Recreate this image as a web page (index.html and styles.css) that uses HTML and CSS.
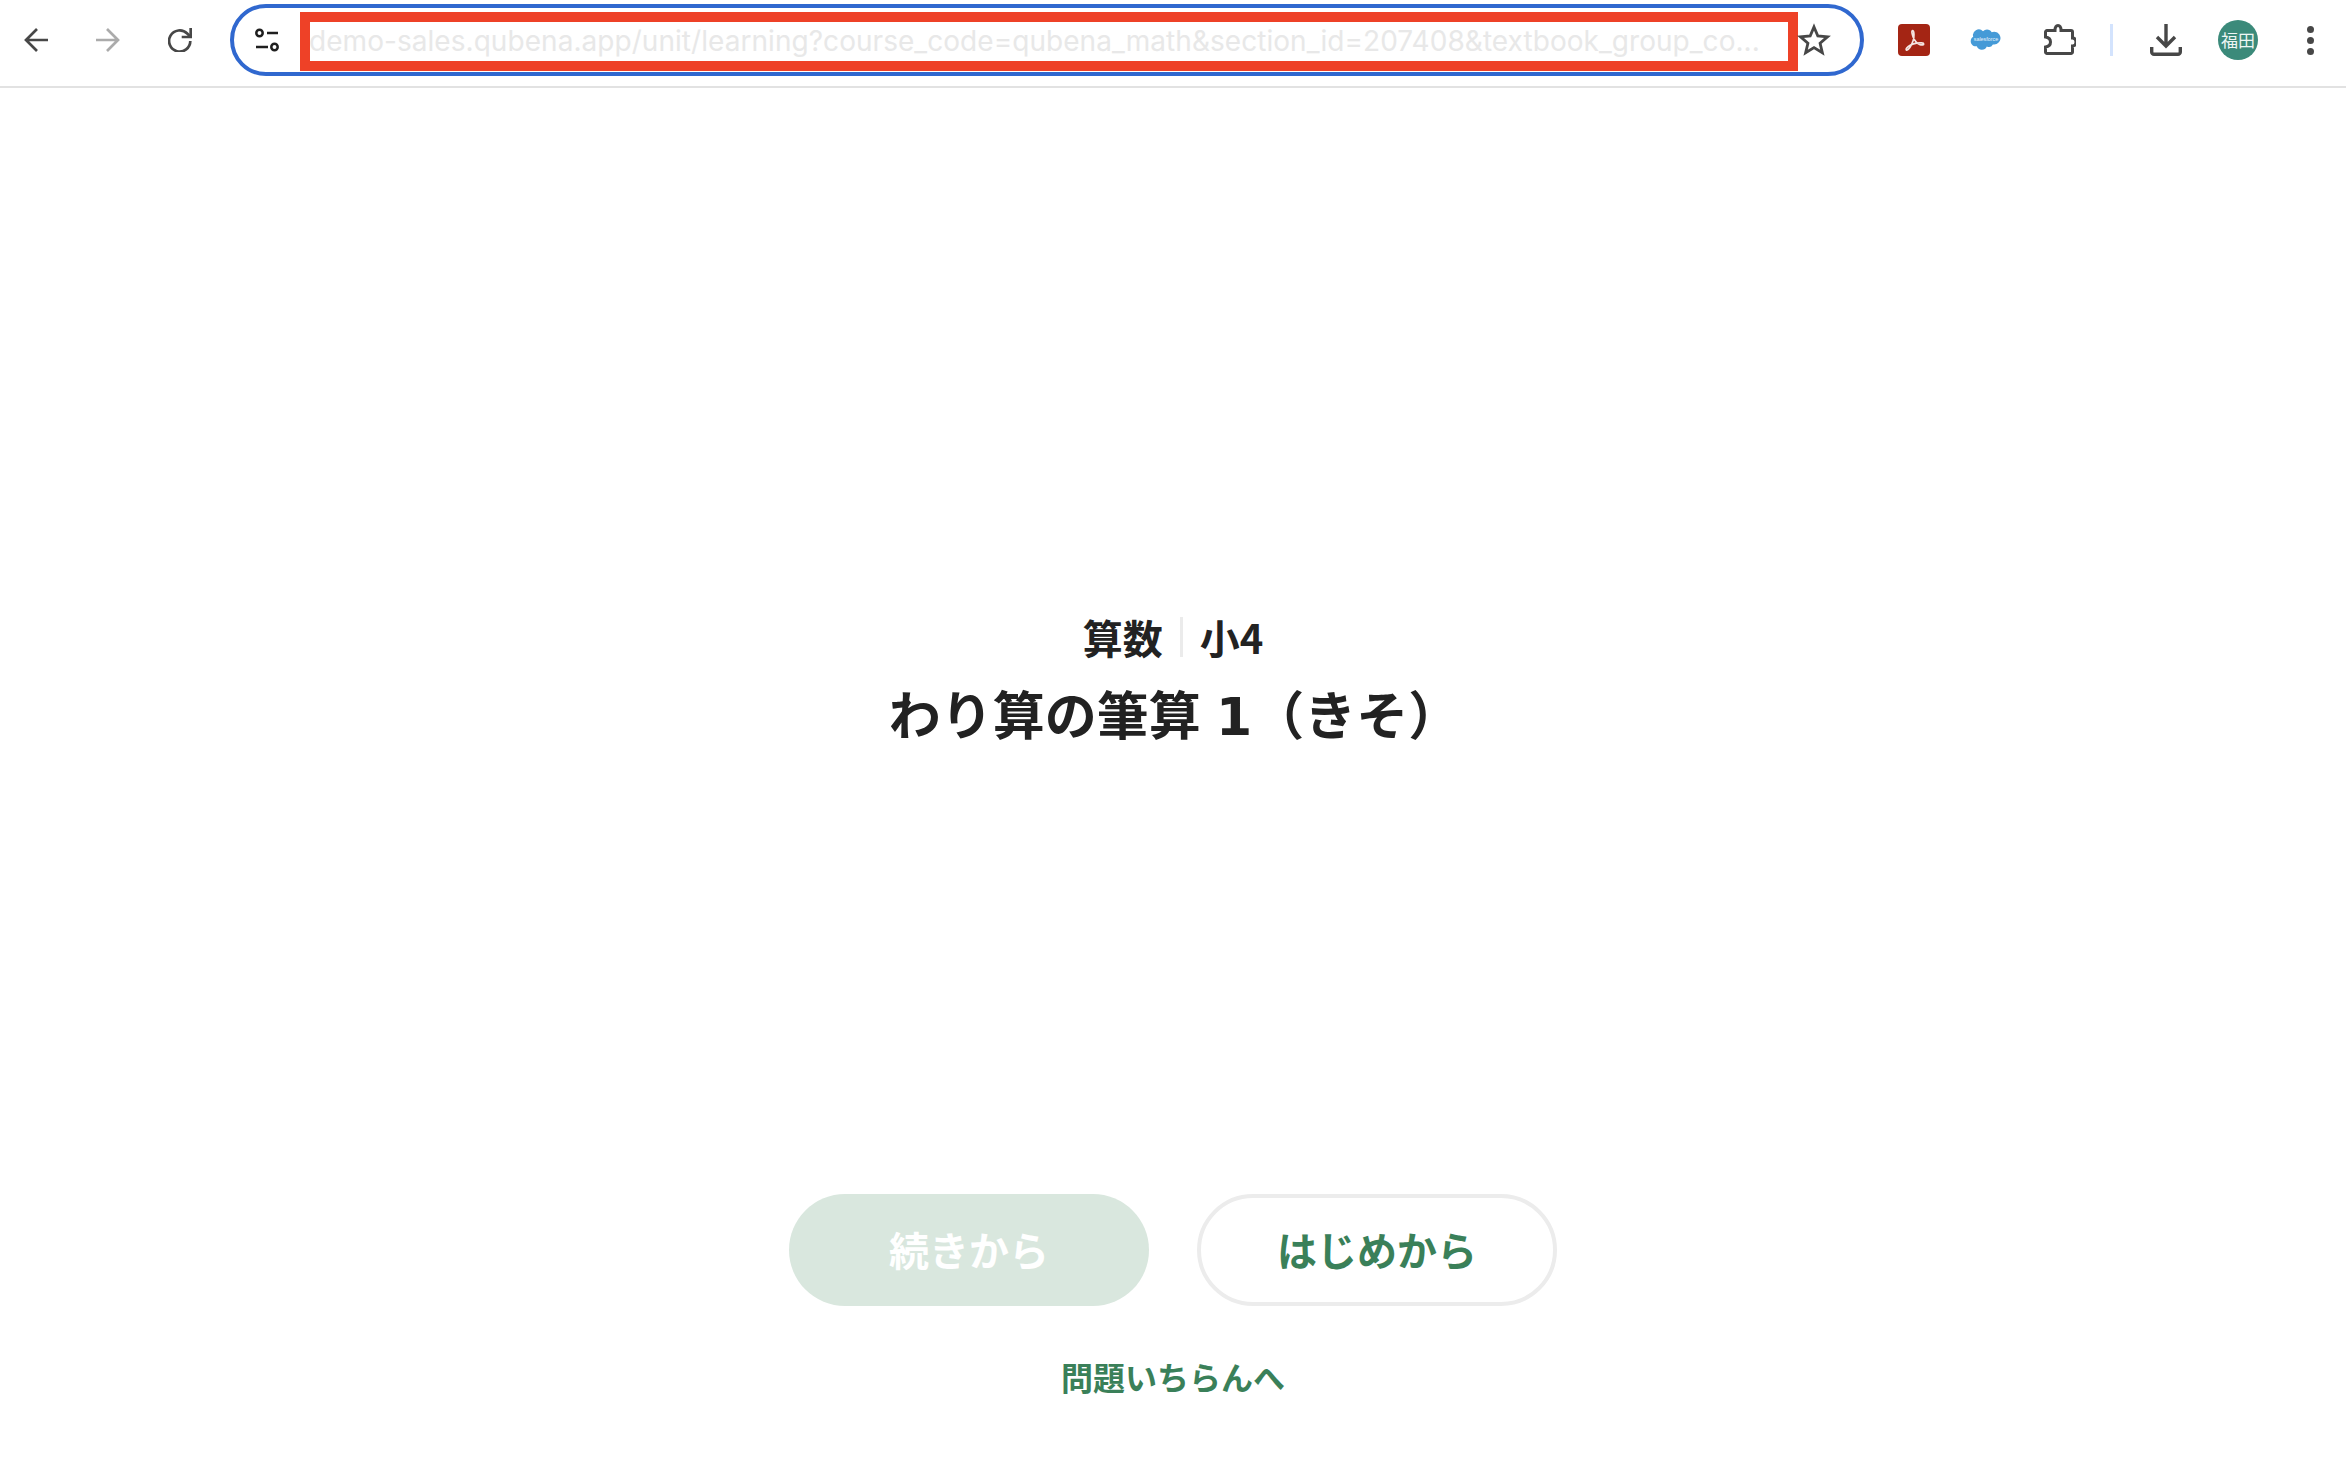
FILE: index.html
```html
<!DOCTYPE html>
<html lang="ja">
<head>
<meta charset="utf-8">
<title>わり算の筆算 1（きそ）</title>
<link rel="stylesheet" href="styles.css">
</head>
<body>
<header class="toolbar">
  <div class="slot nav-first"><svg class="ico" viewBox="0 0 24 24"><path d="M24 12H2M13 1 2 12l11 11" fill="none" stroke="#474747" stroke-width="2.700"/></svg></div>
  <div class="slot nav"><svg class="ico" viewBox="0 0 24 24"><path d="M0 12h22M11 1l11 11-11 11" fill="none" stroke="#ababab" stroke-width="2.700"/></svg></div>
  <div class="slot nav"><svg class="ico" viewBox="0 0 24 24"><path d="M22.300 13a10.600 10.600 0 1 1-3.100-7.500l3 3" fill="none" stroke="#474747" stroke-width="2.700"/><path d="M22.700 0v9h-9" fill="none" stroke="#474747" stroke-width="2.700"/></svg></div>
  <div class="omnibox">
    <div class="tune"><svg class="ico" viewBox="0 0 24 24"><g fill="none" stroke="#1f1f1f" stroke-width="2.500"><circle cx="4.500" cy="5" r="3.200"/><path d="M12 5h11M1 19h12"/><circle cx="19.500" cy="19" r="3.200"/></g></svg></div>
    <div class="url">demo-sales.qubena.app/unit/learning?course_code=qubena_math&amp;section_id=207408&amp;textbook_group_co...</div>
    <div class="star"><svg class="star-ico" viewBox="0 0 24 24"><path d="M12 2.800l2.700 6.400 6.800.6-5.200 4.500 1.600 6.700L12 17.400 6.100 21l1.600-6.700-5.200-4.500 6.800-.6z" fill="none" stroke="#474747" stroke-width="2" stroke-linejoin="miter"/></svg></div>
  </div>
  <div class="slot ext-pdf"><svg class="ico32" viewBox="0 0 32 32"><rect width="32" height="32" rx="4" fill="#a42514"/><path d="M14.700 6.500c-1.100 0-1.100 2.600.4 6.500 1.600 4 3.700 6.600 6.900 7.600 2.300.7 3.700.2 3.700-.7 0-1.100-3-1.400-7-.8-4 .7-8 2.400-10 5-1 1.400-.5 2.300.4 1.900 2-.9 4.500-5.200 6-9.300 1.200-3.400 1.200-9.900-.4-10.200z" fill="none" stroke="#f4e4e0" stroke-width="1.700"/></svg></div>
  <div class="slot ext"><svg class="cloud" viewBox="0 0 32 24"><path d="M13 3.200a5.500 5.500 0 0 1 4-1.700c2 0 3.800 1.100 4.700 2.700a6 6 0 0 1 2.500-.5c3.400 0 6.300 2.900 6.300 6.400s-2.900 6.400-6.300 6.400h-1.300a4.700 4.700 0 0 1-6.100 2 5.400 5.400 0 0 1-10-.3c-.4.100-.8.100-1.200.1-2.700 0-4.900-2.300-4.900-5.100 0-1.900 1-3.500 2.500-4.400a5.800 5.800 0 0 1 9.800-5.600z" fill="#459ad7"/><text x="16" y="12.500" class="cloud-text" text-anchor="middle">salesforce</text></svg></div>
  <div class="slot ext-puzzle"><svg class="ico32" viewBox="0 0 32 32"><path d="M3 6.500H11C11 3 12 1.500 14 1.500S17 3 17 6.500H27a1.500 1.500 0 0 1 1.500 1.500V14C31 14 32 16 32 18S31 22 28.500 22V28a1.500 1.500 0 0 1-1.500 1.500H3a1.500 1.500 0 0 1-1.500-1.500V23C5 22.500 6.500 20.500 6.500 18S5 13.500 1.500 13V8A1.500 1.500 0 0 1 3 6.500z" fill="none" stroke="#474747" stroke-width="3"/></svg></div>
  <div class="sep"></div>
  <div class="slot ext-down"><svg class="ico32" viewBox="0 0 32 32"><path d="M16 0v21M7 13l9 9 9-9" fill="none" stroke="#474747" stroke-width="3.400"/><path d="M1.700 23v5a2.300 2.300 0 0 0 2.300 2.300h24a2.300 2.300 0 0 0 2.300-2.300v-5" fill="none" stroke="#474747" stroke-width="3.400"/></svg></div>
  <div class="slot ext"><div class="avatar">福田</div></div>
  <div class="slot ext"><div class="dots"><span></span><span></span><span></span></div></div>
</header>
<main class="page">
  <div class="heading">
    <p class="sub"><span>算数</span><span class="divider"></span><span>小4</span></p>
    <h1 class="title">わり算の筆算<span class="num"> 1</span>（きそ）</h1>
  </div>
  <div class="actions">
    <button class="btn btn-off">続きから</button>
    <button class="btn btn-line">はじめから</button>
  </div>
  <a class="list-link">問題いちらんへ</a>
</main>
</body>
</html>
```
FILE: styles.css
```css
* { box-sizing: border-box; }
html, body { margin: 0; padding: 0; background: #fff; }
body { width: 2346px; height: 1466px; overflow: hidden; font-family: "Noto Sans CJK JP", "Noto Sans", sans-serif; color: #222; }
.toolbar { height: 88px; padding: 4px 0 0 12px; display: flex; align-items: flex-start; border-bottom: 2px solid #e2e2e2; }
.slot { width: 48px; height: 72px; display: flex; align-items: center; justify-content: center; flex: none; }
.nav { margin-left: 24px; }
.ico { width: 24px; height: 24px; }
.ico32 { width: 32px; height: 32px; }
.omnibox { width: 1634px; height: 72px; margin-left: 26px; border: 4px solid #3068cf; border-radius: 36px; display: flex; align-items: flex-start; flex: none; }
.tune { width: 66px; height: 64px; display: flex; align-items: center; justify-content: center; flex: none; }
.url { width: 1498px; height: 59px; margin-top: 4px; border: 10px solid #ee4127; flex: none; font: 28px/38px "Inter", sans-serif; letter-spacing: 0.05px; text-indent: -1px; color: #e8e8e8; white-space: nowrap; overflow: hidden; }
.star { flex: 1; height: 64px; display: flex; align-items: center; margin-left: -1px; }
.star-ico { width: 34px; height: 34px; }
.ext-pdf { margin-left: 26px; }
.ext { margin-left: 24px; }
.ext-puzzle { margin-left: 26px; }
.cloud { width: 32px; height: 24px; }
.cloud-text { font: 5.400px "Liberation Sans", sans-serif; fill: #e6f2fa; }
.sep { width: 3px; height: 32px; margin: 20px 0 0 26px; background: #d3e3fd; flex: none; }
.ext-down { margin-left: 29px; }
.avatar { width: 40px; height: 40px; border-radius: 50%; background: #3b8a7a; color: #eef6f4; font: 400 17px/40px "Noto Sans CJK JP", sans-serif; text-align: center; flex: none; }
.dots { display: flex; flex-direction: column; gap: 4px; }
.dots span { width: 7px; height: 7px; border-radius: 50%; background: #474747; }
.page { display: flex; flex-direction: column; align-items: center; padding-top: 520px; }
.heading { display: flex; flex-direction: column; align-items: center; }
.sub { margin: 0; display: flex; align-items: center; font-size: 40px; font-weight: 700; line-height: 58px; }
.divider { width: 3px; height: 40px; margin: 0 17px; background: #ebebeb; }
.title { margin: 9px 0 0 3px; font-size: 52px; font-weight: 700; line-height: 76px; }
.num { font-family: "DejaVu Sans", sans-serif; margin-left: -3px; }
.actions { display: flex; gap: 48px; margin-top: 439px; }
.btn { width: 360px; height: 112px; border-radius: 56px; font: 700 40px/1 "Noto Sans CJK JP", sans-serif; padding: 0 0 2px; }
.btn-off { background: #d9e7de; border: 0; color: #fff; }
.btn-line { background: #fff; border: 4px solid #ececec; color: #3a8059; }
.list-link { margin-top: 47px; font-size: 32px; font-weight: 700; line-height: 46px; color: #3a8059; }
```
